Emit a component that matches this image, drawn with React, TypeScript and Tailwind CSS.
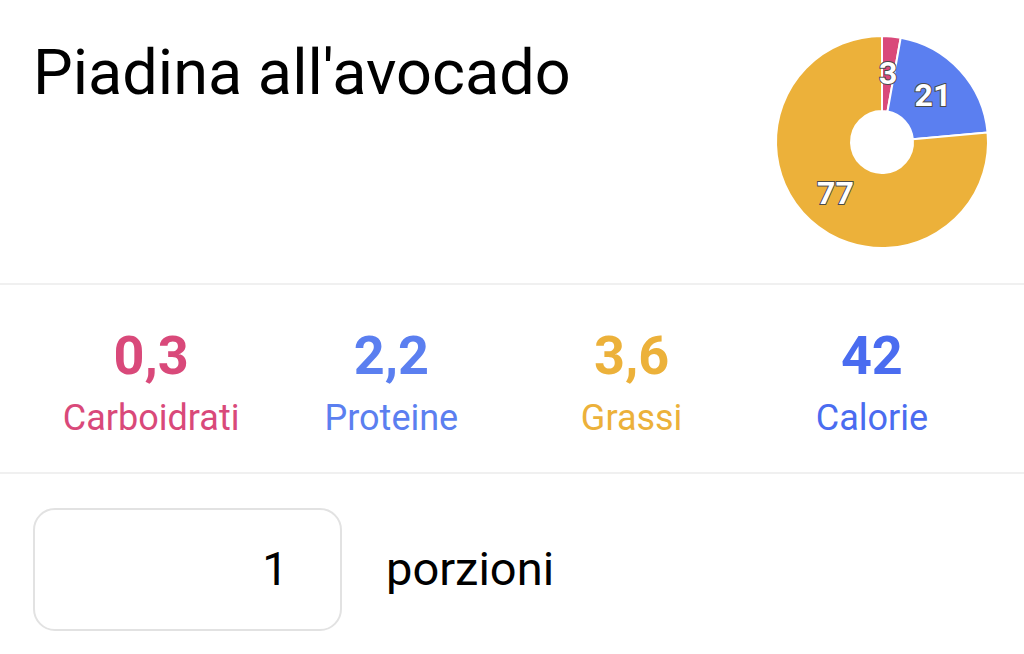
const font = { fontFamily: "Roboto, 'Noto Sans', sans-serif" };

const slices = [
  { value: 0.3 * 4, color: "#d9497a", label: "3" },
  { value: 2.2 * 4, color: "#5b7ff0", label: "21" },
  { value: 3.6 * 9, color: "#ecb13a", label: "77" },
];

function polar(cx: number, cy: number, r: number, deg: number) {
  const a = (deg * Math.PI) / 180;
  return [cx + r * Math.sin(a), cy - r * Math.cos(a)];
}

function MacroPie() {
  const total = slices.reduce((s, x) => s + x.value, 0);
  const cx = 110, cy = 110, R = 106, r = 31;
  let start = 0;
  const parts = slices.map((s) => {
    const sweep = (s.value / total) * 360;
    const end = start + sweep;
    const [x1, y1] = polar(cx, cy, R, start);
    const [x2, y2] = polar(cx, cy, R, end);
    const [x3, y3] = polar(cx, cy, r, end);
    const [x4, y4] = polar(cx, cy, r, start);
    const large = sweep > 180 ? 1 : 0;
    const d = `M${x1} ${y1} A${R} ${R} 0 ${large} 1 ${x2} ${y2} L${x3} ${y3} A${r} ${r} 0 ${large} 0 ${x4} ${y4} Z`;
    const [lx, ly] = polar(cx, cy, 69, start + sweep / 2);
    start = end;
    return { ...s, d, lx, ly };
  });
  return (
    <svg width="220" height="220" viewBox="0 0 220 220">
      {parts.map((p) => (
        <path key={p.label} d={p.d} fill={p.color} stroke="#ffffff" strokeWidth="2" strokeLinejoin="round" />
      ))}
      {parts.map((p) => (
        <text
          key={"t" + p.label}
          x={p.lx}
          y={p.ly}
          textAnchor="middle"
          dominantBaseline="central"
          fontSize="32"
          fontWeight="700"
          fill="#ffffff"
          stroke="#4a4a4a"
          strokeWidth="2"
          paintOrder="stroke"
          style={font}
        >
          {p.label}
        </text>
      ))}
    </svg>
  );
}

const stats = [
  { value: "0,3", label: "Carboidrati", cls: "text-[#d9497a]" },
  { value: "2,2", label: "Proteine", cls: "text-[#5b7ff0]" },
  { value: "3,6", label: "Grassi", cls: "text-[#ecb13a]" },
  { value: "42", label: "Calorie", cls: "text-[#4a6cf0]" },
];

export default function App() {
  return (
    <div className="w-[1024px] h-[654px] bg-white overflow-hidden text-black" style={font}>
      <div className="flex justify-between h-[283px] pl-[33px] pr-[32px] pt-[32px]">
        <h1 className="text-[63px] leading-[82px] font-normal">Piadina all'avocado</h1>
        <MacroPie />
      </div>
      <div className="h-[2px] bg-[#f0f0f0]" />
      <div className="grid grid-cols-4 h-[187px] pt-[42px] pl-[31px] pr-[32px]">
        {stats.map((s) => (
          <div key={s.label} className={`flex flex-col items-center ${s.cls}`}>
            <div className="text-[54px] leading-[58px] font-bold">{s.value}</div>
            <div className="text-[36px] leading-[42px] mt-[12px]">{s.label}</div>
          </div>
        ))}
      </div>
      <div className="h-[2px] bg-[#f0f0f0]" />
      <div className="flex items-center gap-[44px] pl-[33px] pt-[34px]">
        <div className="w-[309px] h-[123px] border-2 border-[#e2e2e2] rounded-[22px] flex items-center justify-end pr-[52px] text-[46px]">
          1
        </div>
        <div className="text-[47px]">porzioni</div>
      </div>
    </div>
  );
}
